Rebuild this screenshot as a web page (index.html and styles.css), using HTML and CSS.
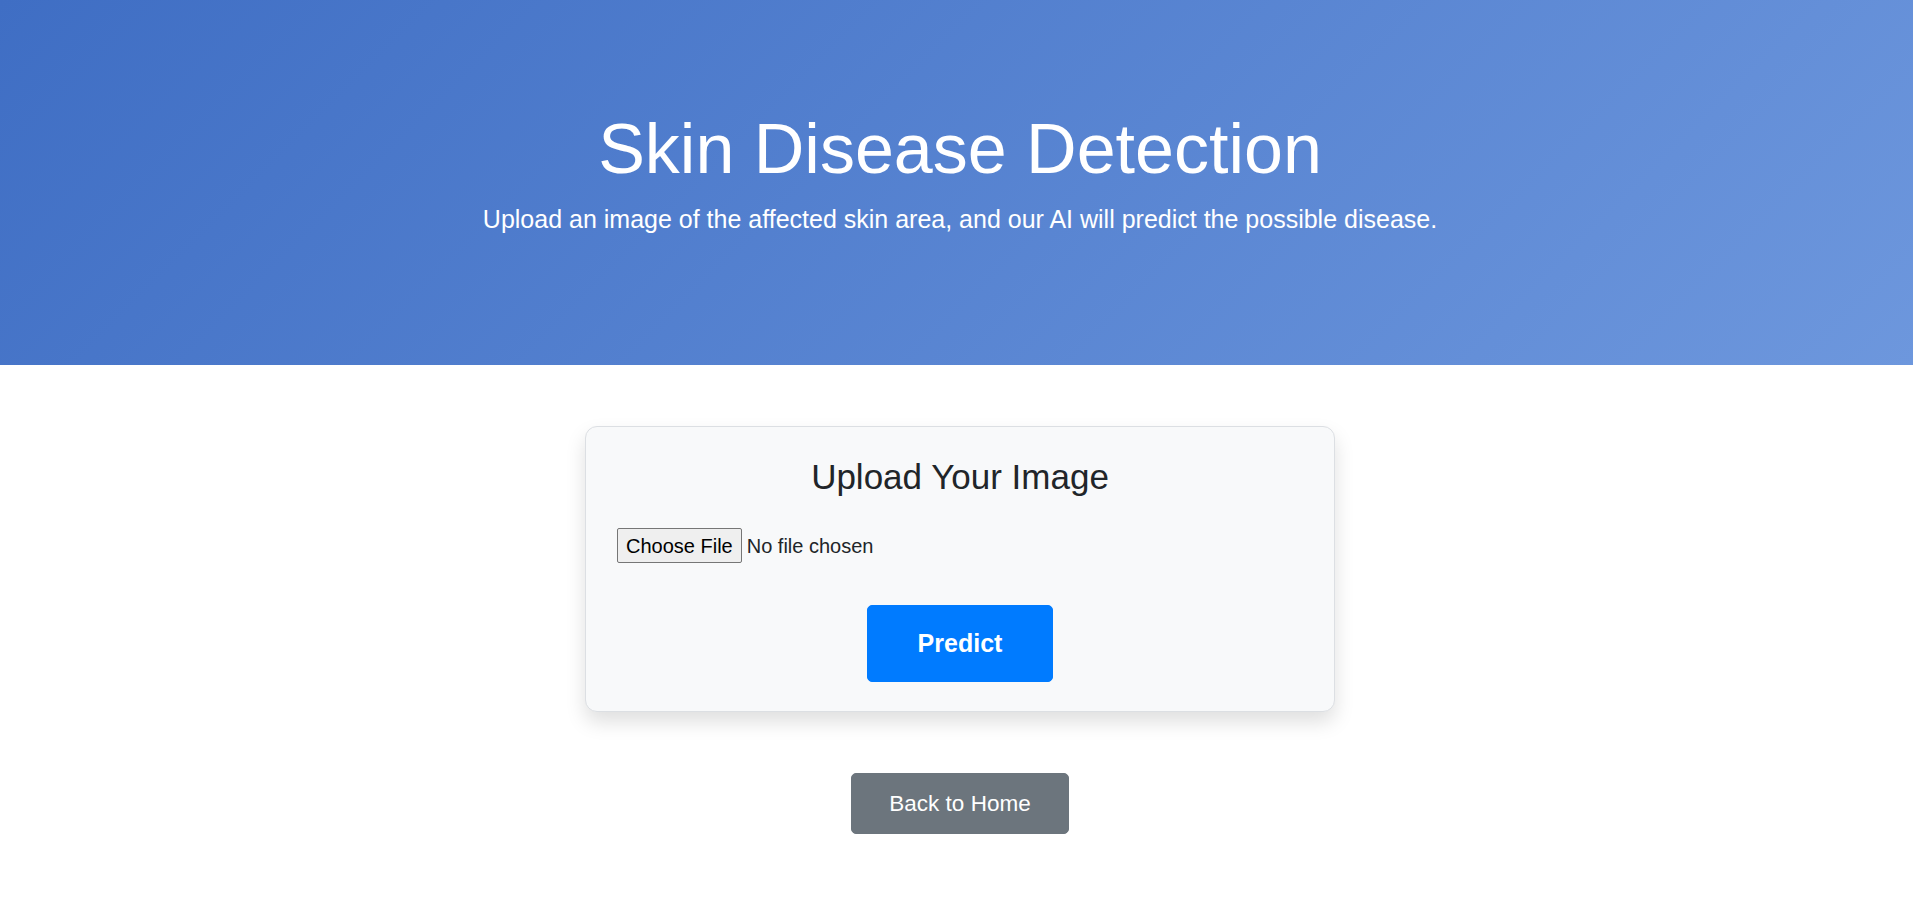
FILE: index.html
```html
<!DOCTYPE html>
<html lang="en">
<head>
<meta charset="utf-8">
<title>Skin Disease Detection</title>
<link rel="stylesheet" href="styles.css">
</head>
<body>
  <header class="hero">
    <h1 class="hero-title">Skin Disease Detection</h1>
    <p class="hero-lead">Upload an image of the affected skin area, and our AI will predict the possible disease.</p>
  </header>
  <main class="main">
    <form class="card">
      <h3 class="card-title">Upload Your Image</h3>
      <div class="file-row">
        <input class="file-input" type="file" name="file">
      </div>
      <div class="predict-row">
        <button class="btn-predict" type="button">Predict</button>
      </div>
    </form>
    <div class="back-row">
      <a class="btn-back" href="#">Back to Home</a>
    </div>
  </main>
</body>
</html>
```
FILE: styles.css
```css
* { box-sizing: border-box; }
html, body { margin: 0; padding: 0; }
body {
  font-family: "Liberation Sans", Arial, sans-serif;
  font-size: 20px;
  line-height: 1.5;
  color: #212529;
  background: #ffffff;
}
.hero {
  background: linear-gradient(135deg, #3f6ec4 0%, #6d97dd 100%);
  color: #ffffff;
  text-align: center;
  padding: 107px 0 106px 7px;
}
.hero-title {
  font-size: 70px;
  font-weight: 400;
  line-height: 1.2;
  margin: 0 0 10px;
}
.hero-lead {
  font-size: 25px;
  line-height: 1.5;
  margin: 0 0 20px;
}
.main {
  padding: 61px 0 40px 7px;
  display: flex;
  flex-direction: column;
  align-items: center;
}
.card {
  width: 750px;
  background: #f8f9fa;
  border: 1px solid #dcdfe3;
  border-radius: 12px;
  box-shadow: 0 10px 20px rgba(0, 0, 0, 0.13);
  padding: 29px;
  margin: 0;
}
.card-title {
  font-size: 35px;
  font-weight: 400;
  line-height: 1.2;
  text-align: center;
  margin: 0 0 30px;
  color: #212529;
}
.file-row {
  display: flex;
  height: 36px;
  align-items: center;
  padding-left: 2px;
}
.file-input {
  font: inherit;
  font-size: 20px;
  line-height: 1.5;
  color: #212529;
}
.file-input::file-selector-button {
  font: inherit;
  line-height: 1.5;
  padding: 1.5px 8px;
  margin-right: 5px;
  border: 1px solid #767676;
  border-radius: 2px;
  background: #efefef;
  color: #000;
}
.predict-row {
  display: flex;
  justify-content: center;
  margin-top: 41px;
}
.btn-predict {
  font-family: "Liberation Sans", Arial, sans-serif;
  font-size: 25px;
  font-weight: 700;
  line-height: 1.5;
  color: #ffffff;
  background: #007bff;
  border: 1px solid #007bff;
  border-radius: 5px;
  padding: 19px 50px;
  cursor: pointer;
}
.back-row {
  margin-top: 61px;
  display: flex;
  justify-content: center;
}
.btn-back {
  display: inline-block;
  font-size: 22.5px;
  line-height: 1.5;
  color: #ffffff;
  background: #6c757d;
  border: 1px solid #6c757d;
  border-radius: 5px;
  padding: 12.5px 37px;
  text-decoration: none;
}
```
